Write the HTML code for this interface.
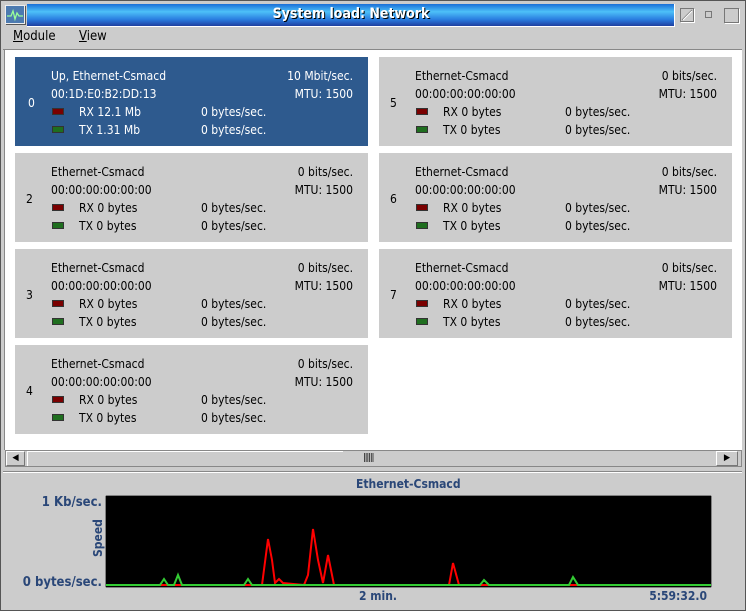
<!DOCTYPE html>
<html><head><meta charset="utf-8"><style>
*{margin:0;padding:0;box-sizing:border-box}
body{width:746px;height:611px;background:#cccccc;font-family:"DejaVu Sans Condensed","DejaVu Sans","Liberation Sans",sans-serif;font-size:12px;position:relative;overflow:hidden;color:#000}
.a{position:absolute;white-space:nowrap}
.card{position:absolute;width:353px;height:89px;background:#cccccc}
.card.sel{background:#2e5a8e;color:#fff}
.card div{position:absolute;white-space:nowrap;line-height:14px}
.sw{width:12px;height:7px;border:1px solid #333}
.b{color:#2a4778;font-weight:bold}
</style></head><body>
<div class="a" style="left:0;top:0;width:746px;height:611px;border:1px solid #555"></div>
<div class="a" style="top:5px;left:5px;width:20px;height:19px;background:#4c7ab0;border:1px solid #eee;box-shadow:1px 1px 0 #555"><svg width="18" height="17"><polyline points="1,10 5,10 7,5 9,13 11,7 13,10 17,10" fill="none" stroke="#9f9" stroke-width="1.3"/></svg></div>
<div class="a" style="left:27px;top:4px;width:648px;height:23px;background:linear-gradient(#1a6fd8,#4dc0f8 35%,#2a7de0 70%,#1f3fa0);border-bottom:1px solid #fff;border-right:1px solid #fff"></div>
<div class="a" style="left:27px;top:6px;width:648px;text-align:center;color:#fff;font-weight:bold;font-size:14px;text-shadow:1px 1px 0 #000">System load: Network</div>
<div class="a" style="left:680px;top:8px;width:14px;height:14px;border:1px solid #777;box-shadow:1px 1px 0 #fff"><svg width="12" height="12" style="display:block"><line x1="1" y1="11" x2="11" y2="1" stroke="#777"/><line x1="2" y1="11" x2="11" y2="2" stroke="#fff"/></svg></div>
<div class="a" style="left:705px;top:11px;width:7px;height:7px;border:1px solid #777"></div>
<div class="a" style="left:724px;top:8px;width:15px;height:15px;border:1px solid #777;box-shadow:1px 1px 0 #fff"></div>
<div class="a" style="left:13px;top:29px;font-size:13px"><u>M</u>odule</div>
<div class="a" style="left:79px;top:29px;font-size:13px"><u>V</u>iew</div>
<div class="a" style="left:3px;top:49px;width:739px;height:1px;background:#888"></div>
<div class="a" style="left:4px;top:50px;width:738px;height:400px;background:#fff;border-left:1px solid #888"></div>

<div class="card sel" style="left:15px;top:57px">
<div style="left:13px;top:39px">0</div>
<div style="left:36px;top:12px">Up, Ethernet-Csmacd</div><div style="right:15px;top:12px">10 Mbit/sec.</div>
<div style="left:36px;top:30px">00:1D:E0:B2:DD:13</div><div style="right:15px;top:30px">MTU: 1500</div>
<div class="sw" style="left:37px;top:51px;background:#7a0000"></div><div style="left:64px;top:48px">RX 12.1 Mb</div><div style="left:186px;top:48px">0 bytes/sec.</div>
<div class="sw" style="left:37px;top:69px;background:#1f6e1f"></div><div style="left:64px;top:66px">TX 1.31 Mb</div><div style="left:186px;top:66px">0 bytes/sec.</div>
</div>

<div id="cards"></div>
<script>
var pos=[[15,153,2],[15,249,3],[15,345,4],[379,57,5],[379,153,6],[379,249,7]];
var h='';
pos.forEach(function(p){
h+='<div class="card" style="left:'+p[0]+'px;top:'+p[1]+'px">'+
'<div style="left:11px;top:39px">'+p[2]+'</div>'+
'<div style="left:36px;top:12px">Ethernet-Csmacd</div><div style="right:15px;top:12px">0 bits/sec.</div>'+
'<div style="left:36px;top:30px">00:00:00:00:00:00</div><div style="right:15px;top:30px">MTU: 1500</div>'+
'<div class="sw" style="left:37px;top:51px;background:#7a0000"></div><div style="left:64px;top:48px">RX 0 bytes</div><div style="left:186px;top:48px">0 bytes/sec.</div>'+
'<div class="sw" style="left:37px;top:69px;background:#1f6e1f"></div><div style="left:64px;top:66px">TX 0 bytes</div><div style="left:186px;top:66px">0 bytes/sec.</div></div>';
});
document.getElementById('cards').innerHTML=h;
</script>

<div class="a" style="left:5px;top:450px;width:737px;height:17px;background:#ccc;border:1px solid #888"></div>
<div class="a" style="left:6px;top:451px;width:19px;height:15px;border:1px solid #fff;border-right-color:#777;border-bottom-color:#777;font-size:9px;text-align:center;line-height:13px">&#9664;</div>
<div class="a" style="left:27px;top:451px;width:316px;height:15px;border-top:1px solid #fff;border-left:1px solid #fff"></div>
<div class="a" style="left:363px;top:453px;font-size:9px;letter-spacing:-1px">||||||</div>
<div class="a" style="left:716px;top:451px;width:22px;height:15px;border:1px solid #fff;border-right-color:#777;border-bottom-color:#777;font-size:9px;text-align:center;line-height:13px">&#9654;</div>
<div class="a" style="left:3px;top:471px;width:739px;height:2px;border-top:1px solid #888;border-bottom:1px solid #fff"></div>

<div class="a b" style="left:356px;top:477px">Ethernet-Csmacd</div>
<div class="a b" style="right:644px;top:495px;font-size:13px">1 Kb/sec.</div>
<div class="a b" style="right:644px;top:575px;font-size:13px">0 bytes/sec.</div>
<div class="a b" style="left:80px;top:532px;transform:rotate(-90deg);transform-origin:center;width:36px;text-align:center">Speed</div>
<div class="a b" style="left:359px;top:589px">2 min.</div>
<div class="a b" style="right:39px;top:589px">5:59:32.0</div>
<svg class="a" style="left:105px;top:495px" width="607" height="93">
<rect x="0" y="0" width="607" height="93" fill="#000" stroke="#fff" stroke-width="1"/>
<g transform="translate(-105,-495)" fill="none" stroke-width="2">
<polyline stroke="#f00" points="157,585 262,585 268,539 272,560 275,583 279,579 283,583 304,585 308,575 313,529 318,560 323,583 328,555 334,585 449,585 453,563 459,585 711,585"/>
<polyline stroke="#3c3" points="106,585 160,585 164,579 168,585 174,585 178,575 182,585 244,585 248,579 252,585 480,585 484,580 489,585 569,585 573,577 578,585 711,585"/>
</g></svg>
</body></html>
